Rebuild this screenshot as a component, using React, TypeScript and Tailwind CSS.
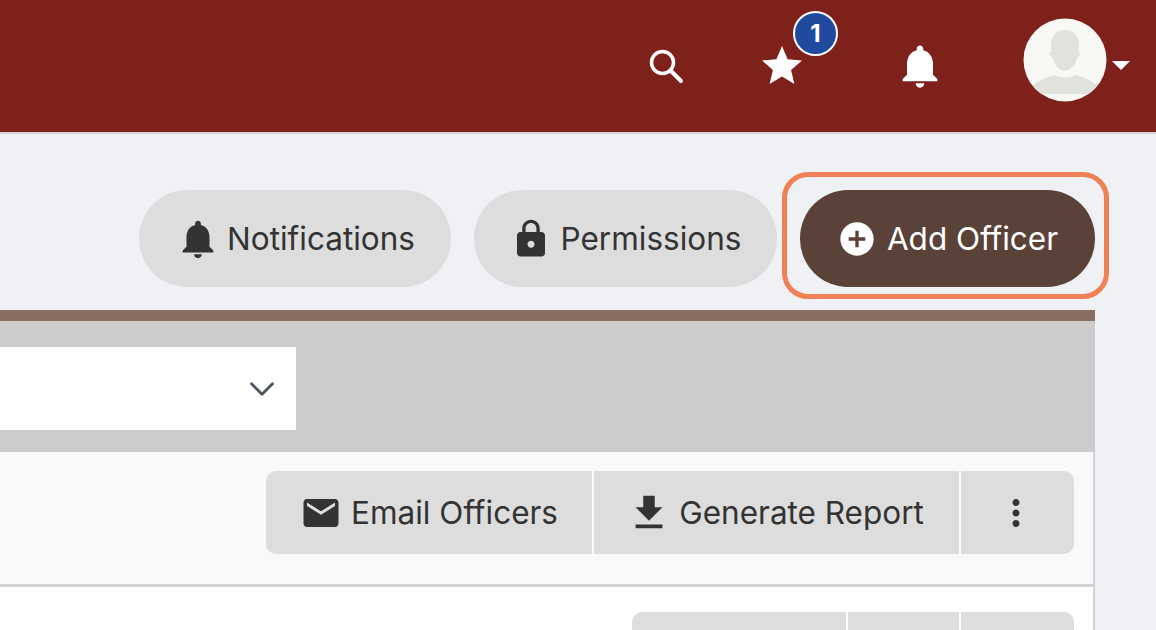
import { ChevronDown } from "lucide-react";
import { MdAddCircle, MdEmail, MdFileDownload, MdLock, MdMoreVert, MdNotifications, MdStar } from "react-icons/md";

function Avatar() {
    return (
        <svg viewBox="0 0 84 84" className="w-[84px] h-[84px]">
            <defs>
                <clipPath id="avatarClip"><circle cx="42" cy="42" r="41.5" /></clipPath>
            </defs>
            <g clipPath="url(#avatarClip)">
                <rect width="84" height="84" fill="#f8f8f5" />
                <path d="M42 12c-8 0-14 6-14 15 0 2 0 5 .5 7-1.500 0-2 1-1.500 2.500.500 1.500 1.500 2.500 2.500 3 1.500 5 5 13 12.500 13s11-8 12.500-13c1-.500 2-1.500 2.500-3 .500-1.500 0-2.500-1.500-2.500.500-2 .500-5 .500-7 0-9-6-15-14-15z" fill="#e2e2dd" />
                <path d="M9 68c4-4 14-9 22-11 3 1.500 7 2.500 11 2.500s8-1 11-2.500c8 2 18 7 22 11v8H9z" fill="#e2e2dd" />
            </g>
        </svg>
    );
}

function SearchIcon() {
    return (
        <svg viewBox="0 0 36 36" className="w-[36px] h-[36px] mr-[74px]" fill="none" stroke="currentColor">
            <circle cx="14.500" cy="14.500" r="11" strokeWidth="3.500" />
            <path d="M22.500 22.500L33 33" strokeWidth="4" strokeLinecap="round" />
        </svg>
    );
}

function Pill({ icon, label, className }: { icon: React.ReactNode; label: string; className: string }) {
    return (
        <button className={`h-[97px] rounded-[48px] flex items-center justify-center text-[31.5px] ${className}`}>
            {icon}
            {label}
        </button>
    );
}

function ToolButton({ icon, label, className }: { icon: React.ReactNode; label: string; className: string }) {
    return (
        <div className={`h-full bg-[#dddddd] flex items-center justify-center text-[31.5px] text-[#333333] ${className}`}>
            {icon}
            {label}
        </div>
    );
}

export default function App() {
    return (
        <div className="w-[1156px] h-[630px] overflow-hidden bg-[#eff1f5] font-['Inter',sans-serif] flex flex-col">
            <header className="h-[134px] shrink-0 bg-[#7e211b] border-b-2 border-[#d5d5d8] flex items-center justify-end text-white">
                <SearchIcon />
                <div className="relative mr-[88px]">
                    <MdStar size={48} />
                    <span className="absolute left-[35px] -top-[31px] w-[45px] h-[45px] rounded-full bg-[#1f4a9e] border-2 border-white flex items-center justify-center text-[24px] font-bold">1</span>
                </div>
                <MdNotifications size={52} className="mr-[77px]" />
                <div className="mb-[12px]">
                    <Avatar />
                </div>
                <div className="ml-[5px] mr-[26px] mb-[2px] w-0 h-0 border-x-[9px] border-x-transparent border-t-[9px] border-t-white" />
            </header>

            <div className="flex items-center justify-end gap-[23px] pr-[61px] pt-[56px] shrink-0">
                <Pill icon={<MdNotifications size={46} className="mr-[6px]" />} label="Notifications" className="w-[312px] bg-[#dddddd] text-[#333333]" />
                <Pill icon={<MdLock size={42} className="mr-[9px]" />} label="Permissions" className="w-[303px] bg-[#dddddd] text-[#333333]" />
                <div className="relative">
                    <Pill icon={<MdAddCircle size={40} className="mr-[10px]" />} label="Add Officer" className="w-[295px] bg-[#5a4238] text-white" />
                    <div className="absolute -left-[18px] -right-[14px] -top-[18px] -bottom-[12px] rounded-[26px] border-[5px] border-[#f08056]" />
                </div>
            </div>

            <main className="w-[1095px] mt-[23px] flex flex-col flex-1 min-h-0">
                <div className="h-[11px] bg-[#886e63] shrink-0" />
                <div className="h-[131px] bg-[#cccccc] shrink-0 pt-[26px]">
                    <div className="w-[296px] h-[83px] bg-white flex items-center justify-end pr-[13px]">
                        <ChevronDown size={42} strokeWidth={1.6} className="text-[#4f5560]" />
                    </div>
                </div>
                <div className="h-[135px] shrink-0 bg-[#f9f9f9] border-r-2 border-b-[3px] border-[#d3d3d3] flex justify-end pt-[19px] pr-[19px]">
                    <div className="h-[83px] flex gap-[2px] rounded-[10px] overflow-hidden">
                        <ToolButton icon={<MdEmail size={42} className="mr-[9px]" />} label="Email Officers" className="w-[326px]" />
                        <ToolButton icon={<MdFileDownload size={46} className="mr-[7px]" />} label="Generate Report" className="w-[365px] pr-[3px]" />
                        <ToolButton icon={<MdMoreVert size={42} />} label="" className="w-[113px] pr-[4px]" />
                    </div>
                </div>
                <div className="flex-1 bg-white border-r-2 border-[#d3d3d3] flex justify-end pt-[25px] pr-[19px]">
                    <div className="h-[83px] flex gap-[2px] rounded-[10px] overflow-hidden">
                        <div className="w-[214px] bg-[#dddddd]" />
                        <div className="w-[111px] bg-[#dddddd]" />
                        <div className="w-[113px] bg-[#dddddd]" />
                    </div>
                </div>
            </main>
        </div>
    );
}
